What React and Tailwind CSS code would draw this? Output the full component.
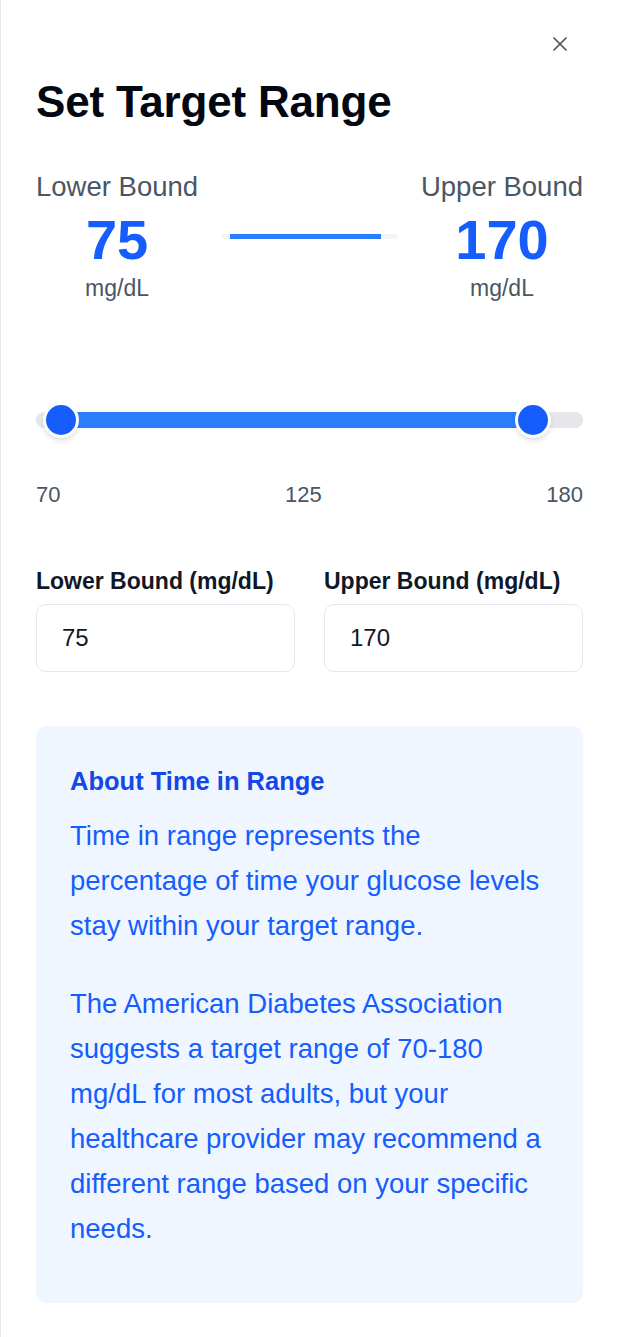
import React from "react";

export default function App() {
  const min = 70;
  const max = 180;
  const lower = 75;
  const upper = 170;
  const lowPct = ((lower - min) / (max - min)) * 100;
  const highPct = ((upper - min) / (max - min)) * 100;

  return (
    <div className="min-h-screen bg-white border-l border-gray-200 pl-[35px] pr-[34px] font-['Liberation_Sans',Arial,sans-serif]">
      {/* Close */}
      <div className="flex justify-end pt-[37px] pr-[16px]">
        <button className="w-[14px] h-[14px] text-[#4b5563]" aria-label="Close">
          <svg width="14" height="14" viewBox="0 0 14 14" fill="none" stroke="currentColor" strokeWidth="1.7" strokeLinecap="round">
            <path d="M1 1L13 13" />
            <path d="M13 1L1 13" />
          </svg>
        </button>
      </div>

      {/* Title */}
      <h1 className="mt-[29px] text-[44px] leading-[44px] font-bold tracking-[-0.2px] text-[#030712]">Set Target Range</h1>

      {/* Range summary */}
      <div className="mt-[46px] flex items-center gap-6">
        <div className="flex flex-col items-center">
          <div className="text-[27.5px] leading-[34px] text-gray-600">Lower Bound</div>
          <div className="mt-[8px] text-[56px] leading-[56px] font-bold text-blue-600">{lower}</div>
          <div className="mt-[5px] text-[23px] leading-[30px] text-gray-600">mg/dL</div>
        </div>
        <div className="flex-1 h-[5px] bg-gray-100 relative">
          <div
            className="absolute top-0 h-[5px] bg-blue-500"
            style={{ left: `${lowPct}%`, width: `${highPct - lowPct}%` }}
          />
        </div>
        <div className="flex flex-col items-center">
          <div className="text-[27.5px] leading-[34px] text-gray-600">Upper Bound</div>
          <div className="mt-[8px] text-[56px] leading-[56px] font-bold text-blue-600">{upper}</div>
          <div className="mt-[5px] text-[23px] leading-[30px] text-gray-600">mg/dL</div>
        </div>
      </div>

      {/* Slider */}
      <div className="mt-[99px] relative h-[36px]">
        <div className="absolute left-0 right-0 top-[10px] h-[16px] rounded-full bg-gray-200" />
        <div
          className="absolute top-[10px] h-[16px] bg-blue-500"
          style={{ left: `${lowPct}%`, width: `${highPct - lowPct}%` }}
        />
        <div
          className="absolute top-0 w-[36px] h-[36px] -ml-[18px] rounded-full bg-blue-600 border-[3px] border-white shadow-md"
          style={{ left: `${lowPct}%` }}
        />
        <div
          className="absolute top-0 w-[36px] h-[36px] -ml-[18px] rounded-full bg-blue-600 border-[3px] border-white shadow-md"
          style={{ left: `${highPct}%` }}
        />
      </div>

      {/* Ticks */}
      <div className="mt-[43px] flex justify-between text-[22px] leading-[28px] text-gray-600">
        <span>70</span>
        <span>125</span>
        <span>180</span>
      </div>

      {/* Inputs */}
      <div className="mt-[58px] grid grid-cols-2 gap-[29px]">
        <div className="flex flex-col">
          <label className="text-[23px] leading-[28px] font-bold text-gray-900">Lower Bound (mg/dL)</label>
          <input
            type="number"
            defaultValue={lower}
            className="mt-[9px] h-[68px] w-full rounded-[10px] border border-gray-200 pl-[25px] text-[24px] text-gray-900 outline-none"
          />
        </div>
        <div className="flex flex-col">
          <label className="text-[23px] leading-[28px] font-bold text-gray-900">Upper Bound (mg/dL)</label>
          <input
            type="number"
            defaultValue={upper}
            className="mt-[9px] h-[68px] w-full rounded-[10px] border border-gray-200 pl-[25px] text-[24px] text-gray-900 outline-none"
          />
        </div>
      </div>

      {/* Info */}
      <div className="mt-[54px] rounded-[10px] bg-blue-50 px-[34px] pt-[37px] pb-[52px]">
        <h3 className="text-[25.5px] leading-[36px] font-bold text-blue-700">About Time in Range</h3>
        <p className="mt-[14px] text-[27.5px] leading-[45px] text-blue-600">
          Time in range represents the percentage of time your glucose levels stay within your target range.
        </p>
        <p className="mt-[33px] text-[27.5px] leading-[45px] text-blue-600">
          The American Diabetes Association suggests a target range of 70-180 mg/dL for most adults, but your healthcare provider may recommend a different range based on your specific needs.
        </p>
      </div>
      <div className="h-[35px]" />
    </div>
  );
}
